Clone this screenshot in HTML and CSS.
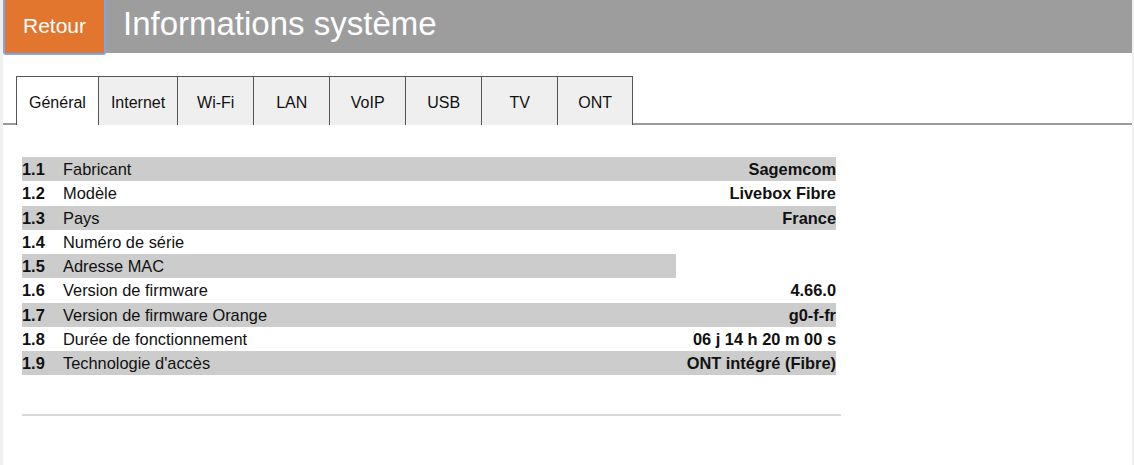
FILE: index.html
```html
<!DOCTYPE html>
<html lang="fr">
<head>
  <meta charset="UTF-8" />
  <title>Informations système</title>
  <link rel="stylesheet" href="styles.css">
</head>
<body>
  <div class="page">
    <div class="header">
      <button class="back-btn">Retour</button>
      <h1>Informations système</h1>
    </div>

    <div class="tabs">
      <span class="tab-edge"></span>
      <a class="tab active">Général</a>
      <a class="tab">Internet</a>
      <a class="tab">Wi-Fi</a>
      <a class="tab">LAN</a>
      <a class="tab">VoIP</a>
      <a class="tab">USB</a>
      <a class="tab">TV</a>
      <a class="tab last">ONT</a>
      <span class="tab-fill"></span>
    </div>

    <table class="info">
      <tr class="odd"><td class="num">1.1</td><td>Fabricant</td><td class="val">Sagemcom</td></tr>
      <tr><td class="num">1.2</td><td>Modèle</td><td class="val">Livebox Fibre</td></tr>
      <tr class="odd"><td class="num">1.3</td><td>Pays</td><td class="val">France</td></tr>
      <tr><td class="num">1.4</td><td>Numéro de série</td><td class="val"></td></tr>
      <tr class="odd"><td class="num">1.5</td><td>Adresse MAC</td><td class="val masked"></td></tr>
      <tr><td class="num">1.6</td><td>Version de firmware</td><td class="val">4.66.0</td></tr>
      <tr class="odd"><td class="num">1.7</td><td>Version de firmware Orange</td><td class="val">g0-f-fr</td></tr>
      <tr><td class="num">1.8</td><td>Durée de fonctionnement</td><td class="val">06 j 14 h 20 m 00 s</td></tr>
      <tr class="odd"><td class="num">1.9</td><td>Technologie d'accès</td><td class="val">ONT intégré (Fibre)</td></tr>
    </table>

    <hr class="sep" />
  </div>
</body>
</html>
```

FILE: styles.css
```css
body {
  margin: 0;
  background: #f0f0f0;
  font-family: 'Liberation Sans', Arial, sans-serif;
  color: #111;
}

.page {
  margin: 0 2px 0 3px;
  background: #ffffff;
  min-height: 100vh;
}

.header {
  display: flex;
  align-items: flex-start;
  background: #9d9d9d;
  height: 53px;
}

.back-btn {
  width: 103px;
  height: 55px;
  margin: 0;
  padding: 0 0 2px;
  background: #e2762f;
  color: #ffffff;
  font-family: inherit;
  font-size: 21px;
  border: 2px solid #7fa6e6;
  border-top: none;
  border-radius: 0 0 3px 3px;
  cursor: pointer;
}

h1 {
  margin: 0 0 0 17px;
  color: #ffffff;
  font-size: 33px;
  font-weight: normal;
  line-height: 47px;
}

/* Tabs */
.tabs {
  display: flex;
  align-items: stretch;
  margin-top: 23px;
  height: 49px;
}

.tab-edge {
  width: 13px;
  border-bottom: 2px solid #9a9a9a;
}

.tab-fill {
  flex: 1;
  border-bottom: 2px solid #9a9a9a;
}

.tab {
  box-sizing: border-box;
  min-width: 76px;
  padding: 3px 12px 0;
  display: flex;
  align-items: center;
  justify-content: center;
  font-size: 16px;
  color: #111;
  background: #efefef;
  border-top: 1px solid #555;
  border-left: 1px solid #555;
  cursor: pointer;
}

.tab.active {
  background: #ffffff;
}

.tab.last {
  border-right: 1px solid #555;
}

/* Info table */
.info {
  margin: 32px 0 0 19px;
  width: 814px;
  border-collapse: collapse;
  font-size: 16.4px;
}

.info td {
  height: 24.25px;
  padding: 0;
  line-height: 24px;
}

.info tr.odd td {
  background: #cccccc;
}

.info td.num {
  width: 41px;
  font-weight: bold;
}

.info td.val {
  width: 160px;
  text-align: right;
  font-weight: bold;
  white-space: nowrap;
}

.info tr.odd td.masked {
  background: #ffffff;
}

.sep {
  margin: 39px 0 0 19px;
  width: 819px;
  height: 0;
  border: none;
  border-top: 2px solid #d8d8d8;
}
```
